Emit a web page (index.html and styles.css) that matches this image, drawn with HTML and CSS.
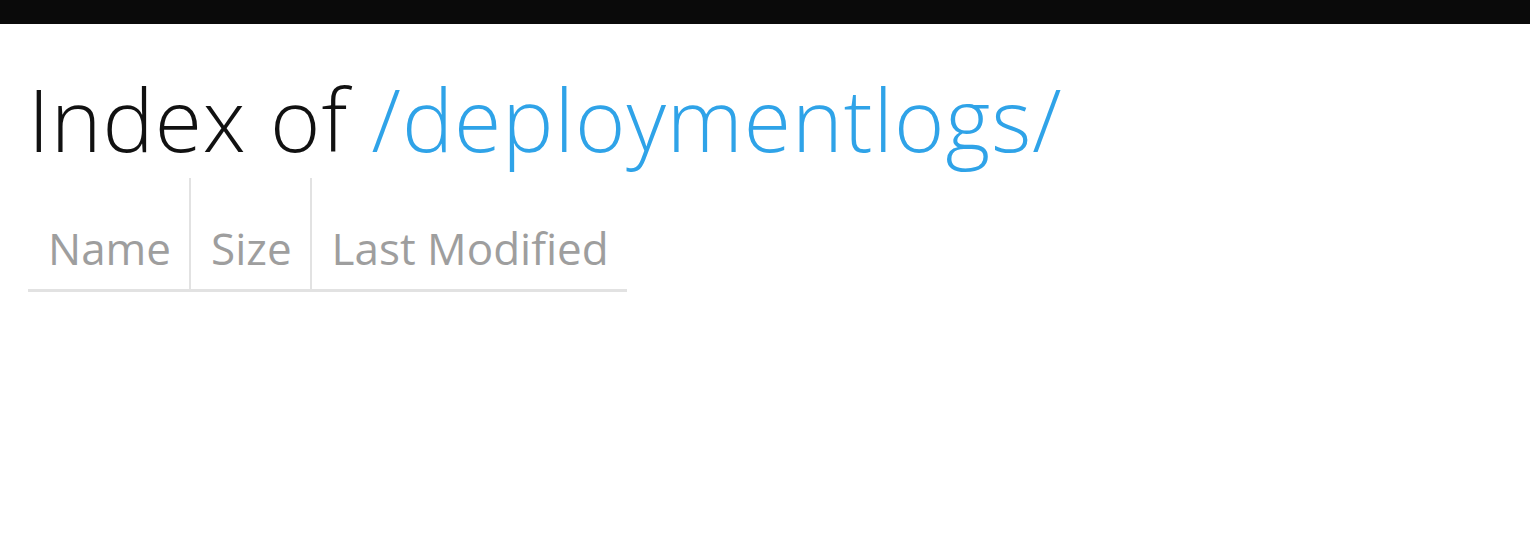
FILE: index.html
```html
<!DOCTYPE html>
<html lang="en">
<head>
<meta charset="UTF-8">
<title>Index of /deploymentlogs/</title>
<link rel="stylesheet" href="styles.css">
</head>
<body>

<!-- Top bar -->
<div class="top-bar"></div>

<div class="content">
  <h1>Index of <a href="/deploymentlogs/">/deploymentlogs/</a></h1>

  <table class="listing">
    <thead>
      <tr>
        <th>Name</th>
        <th>Size</th>
        <th>Last Modified</th>
      </tr>
    </thead>
    <tbody></tbody>
  </table>
</div>

</body>
</html>
```

FILE: styles.css
```css
body {
  font-family: "Open Sans", "Noto Sans", sans-serif;
  margin: 0;
  padding: 0;
  background-color: #fff;
}

.top-bar {
  height: 24px;
  background-color: #0a0a0a;
}

.content {
  padding: 0 28px;
}

h1 {
  font-size: 86px;
  font-weight: 300;
  line-height: 1;
  color: #111;
  margin: 52px 0 16px 0;
  letter-spacing: 1px;
}

h1 a {
  color: #2fa3e8;
  text-decoration: none;
}

/* Directory listing */
.listing {
  border-collapse: collapse;
}

.listing th {
  font-size: 44px;
  font-weight: 400;
  color: #9e9e9e;
  text-align: left;
  padding: 44px 18px 14px 20px;
  border-left: 2px solid #e2e2e2;
  border-bottom: 3px solid #e2e2e2;
  line-height: 1.2;
}

.listing th:first-child {
  border-left: none;
}
```
